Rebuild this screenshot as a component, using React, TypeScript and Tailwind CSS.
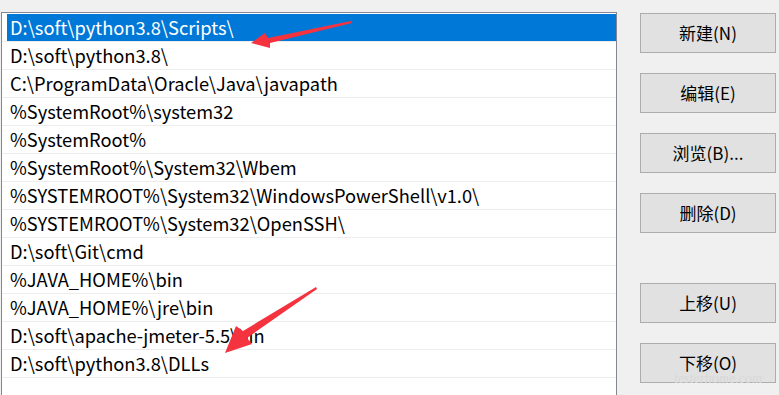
const paths = [
  "D:\\soft\\python3.8\\Scripts\\",
  "D:\\soft\\python3.8\\",
  "C:\\ProgramData\\Oracle\\Java\\javapath",
  "%SystemRoot%\\system32",
  "%SystemRoot%",
  "%SystemRoot%\\System32\\Wbem",
  "%SYSTEMROOT%\\System32\\WindowsPowerShell\\v1.0\\",
  "%SYSTEMROOT%\\System32\\OpenSSH\\",
  "D:\\soft\\Git\\cmd",
  "%JAVA_HOME%\\bin",
  "%JAVA_HOME%\\jre\\bin",
  "D:\\soft\\apache-jmeter-5.5\\bin",
  "D:\\soft\\python3.8\\DLLs",
];

const buttons = [
  { label: "新建(N)", gap: "mt-0" },
  { label: "编辑(E)", gap: "mt-[20px]" },
  { label: "浏览(B)...", gap: "mt-[20px]" },
  { label: "删除(D)", gap: "mt-[20px]" },
  { label: "上移(U)", gap: "mt-[50px]" },
  { label: "下移(O)", gap: "mt-[20px]" },
];

const font = "font-['Microsoft_YaHei','Noto_Sans_CJK_SC',sans-serif]";

export default function App() {
  return (
    <div className={`relative w-[779px] h-[395px] overflow-hidden bg-[#f0f0f0] flex ${font}`}>
      {/* path list */}
      <div className="ml-[1px] mt-[12px] w-[616px] h-[400px] border-t border-l border-r border-[#828790] bg-white pt-[1px]">
        {paths.map((p, i) => (
          <div key={p} className="h-[28px] border-b border-[#ececec] flex">
            <div
              className={`flex-1 flex items-center pl-[3px] ml-[5px] text-[18.3px] leading-none ${
                i === 0 ? "bg-[#0078d7] text-white" : "text-black"
              }`}
            >
              {p}
            </div>
          </div>
        ))}
      </div>

      {/* buttons */}
      <div className="ml-[23px] mt-[13px] flex flex-col">
        {buttons.map((b) => (
          <button
            key={b.label}
            className={`${b.gap} w-[136px] h-[40px] bg-[#e1e1e1] border border-[#adadad] text-[17px] text-black flex items-center justify-center`}
          >
            {b.label}
          </button>
        ))}
      </div>

      {/* annotation arrows */}
      <svg className="absolute inset-0 pointer-events-none" width="779" height="395">
        <polygon
          points="351,21 268,38 265,33 251,43 270,48 270,43 352,23"
          fill="#f5333f"
        />
        <polygon
          points="316,287 243,331 236,326 225,353 252,344 247,338 317,289"
          fill="#f5333f"
        />
      </svg>

      {/* watermark */}
      <div className="absolute left-[674px] top-[372px] text-[14px] leading-none italic text-[#d8d8d8] font-['Liberation_Serif',serif]">
        testerhome.com
      </div>
    </div>
  );
}
